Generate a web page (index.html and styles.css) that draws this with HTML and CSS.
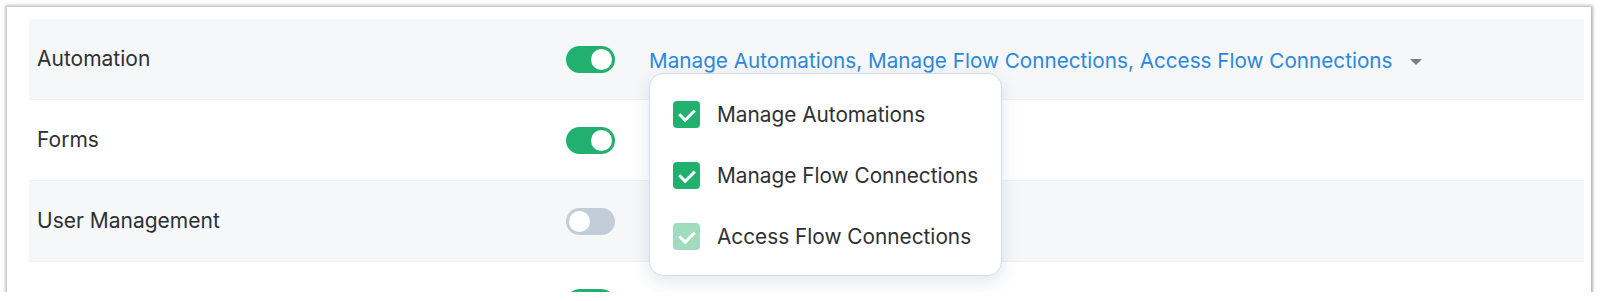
FILE: index.html
```html
<!DOCTYPE html>
<html lang="en">
    <head>
        <meta charset="UTF-8">
        <meta name="viewport" content="width=device-width, initial-scale=1.0">
        <title>Permissions</title>
        <link rel="stylesheet" href="styles.css">
    </head>
    <body>
        <div class="card">
            <div class="row shaded">
                <div class="label">Automation</div>
                <span class="toggle on"></span>
                <div class="perms">
                    <div class="perms-value">
                        Manage Automations, Manage Flow Connections, Access Flow Connections
                        <span class="caret"></span>
                    </div>
                    <div class="menu">
                        <div class="item">
                            <span class="check"></span>
                            Manage Automations
                        </div>
                        <div class="item">
                            <span class="check"></span>
                            Manage Flow Connections
                        </div>
                        <div class="item">
                            <span class="check disabled"></span>
                            Access Flow Connections
                        </div>
                    </div>
                </div>
            </div>
            <div class="row">
                <div class="label">Forms</div>
                <span class="toggle on"></span>
            </div>
            <div class="row shaded">
                <div class="label">User Management</div>
                <span class="toggle"></span>
            </div>
            <div class="row">
                <div class="label"></div>
                <span class="toggle on"></span>
            </div>
        </div>
    </body>
</html>
```

FILE: styles.css
```css
body {
    margin: 0;
    background: #fff;
    font-family: Inter, "Liberation Sans", sans-serif;
    color: #2f3033;
}

.card {
    margin: 7px 9px 0 7px;
    height: 285px;
    padding: 12px 7px 0 22px;
    box-sizing: border-box;
    background: #fff;
    box-shadow: 0 0 3px 2px rgba(0, 0, 0, 0.22), 1px 1px 3px rgba(0, 0, 0, 0.15);
    overflow: hidden;
}

.row {
    display: flex;
    align-items: center;
    height: 80px;
    padding-left: 8px;
    border-bottom: 1px solid #edf1f5;
}

.row.shaded {
    background: #f5f7f9;
}

.label {
    width: 529px;
    font-size: 21px;
    margin-top: -2px;
}

.toggle {
    position: relative;
    width: 49px;
    height: 27px;
    border-radius: 14px;
    background: #c3cdd9;
    flex-shrink: 0;
}

.toggle::after {
    content: "";
    position: absolute;
    top: 3px;
    left: 3px;
    width: 21px;
    height: 21px;
    border-radius: 50%;
    background: #fff;
}

.toggle.on {
    background: #22b06f;
}

.toggle.on::after {
    left: 25px;
}

.perms {
    position: relative;
    margin-left: 34px;
    margin-top: 3px;
}

.perms-value {
    display: flex;
    align-items: center;
    gap: 18px;
    color: #2d87dc;
    font-size: 20.7px;
}

.caret {
    width: 0;
    height: 0;
    border-left: 6px solid transparent;
    border-right: 6px solid transparent;
    border-top: 6px solid #7c7c7c;
    margin-top: 3px;
}

.menu {
    position: absolute;
    top: 25px;
    left: 0;
    width: 353px;
    padding: 10px 0 8px;
    box-sizing: border-box;
    background: #fff;
    border: 1px solid #d3dce6;
    border-radius: 14px;
    box-shadow: 0 6px 18px rgba(40, 60, 90, 0.12);
    z-index: 2;
}

.item {
    display: flex;
    align-items: center;
    gap: 17px;
    height: 61px;
    padding-left: 23px;
    font-size: 20.8px;
    color: #2f3033;
}

.check {
    position: relative;
    width: 27px;
    height: 27px;
    border-radius: 4px;
    background: #22b06f;
    flex-shrink: 0;
}

.check::after {
    content: "";
    position: absolute;
    left: 9px;
    top: 5px;
    width: 7px;
    height: 12px;
    border-right: 3px solid #fff;
    border-bottom: 3px solid #fff;
    transform: rotate(45deg);
}

.check.disabled {
    background: #a0dbbe;
}
```
